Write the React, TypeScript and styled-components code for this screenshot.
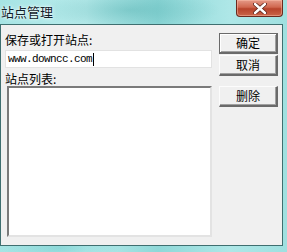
import React from "react";
import styled, { createGlobalStyle } from "styled-components";

const GlobalStyle = createGlobalStyle`
  html, body {
    margin: 0;
    padding: 0;
    background: #9fe2e2;
  }
  body {
    font-family: "Noto Sans CJK SC", "DejaVu Sans", sans-serif;
    font-size: 12px;
    color: #000;
  }
`;

const Frame = styled.div`
  width: 287px;
  height: 252px;
  display: flex;
  flex-direction: column;
  overflow: hidden;
  background:
    radial-gradient(ellipse 90px 20px at 130px 10px, rgba(60, 160, 160, 0.35), transparent),
    radial-gradient(ellipse 60px 14px at 60px 248px, rgba(80, 190, 190, 0.4), transparent),
    linear-gradient(90deg, #a6e4e4 0%, #b9ecec 30%, #8fd8d8 55%, #aee7e7 80%, #9fe0e0 100%);
`;

const TitleBar = styled.div`
  height: 24px;
  display: flex;
  align-items: flex-start;
  justify-content: space-between;
  flex-shrink: 0;
`;

const Title = styled.div`
  padding: 3px 0 0 1px;
  font-size: 13px;
  line-height: 17px;
  color: #10202a;
  text-shadow: 0 0 4px rgba(255, 255, 255, 0.9), 0 0 2px rgba(255, 255, 255, 0.9);
`;

const CloseButton = styled.div`
  width: 45px;
  height: 16px;
  margin-right: 4px;
  border: 1px solid #6b2a1e;
  border-top: none;
  border-radius: 0 0 4px 4px;
  background: linear-gradient(180deg, #e59a88 0%, #d0674f 45%, #b7432b 55%, #c9664a 100%);
  box-shadow: inset 0 0 0 1px rgba(255, 200, 180, 0.45);
  display: flex;
  align-items: center;
  justify-content: center;
`;

const Client = styled.div`
  flex: 1;
  margin: 0 4px 7px 0;
  border: 1px solid #3f6f70;
  background: #f0f0f0;
  display: flex;
  padding: 8px 4px 0 4px;
  gap: 7px;
`;

const LeftColumn = styled.div`
  width: 207px;
  display: flex;
  flex-direction: column;
`;

const Label = styled.div<{ $top: number }>`
  margin-top: ${(p) => p.$top}px;
  height: 14px;
  line-height: 14px;
  font-size: 12px;
  white-space: nowrap;
`;

const TextInput = styled.div`
  margin-top: 3px;
  height: 16px;
  border: 1px solid #e2e2e2;
  background: #fff;
  display: flex;
  align-items: center;
  padding-left: 2px;
  font-family: "Liberation Mono", "DejaVu Sans Mono", monospace;
  font-size: 11px;
  letter-spacing: -0.6px;
`;

const Caret = styled.span`
  display: inline-block;
  width: 1px;
  height: 13px;
  background: #000;
  margin-left: 1px;
`;

const ListBox = styled.div`
  margin: 0 0 8px 2px;
  width: 201px;
  height: 147px;
  background: #fff;
  border-top: 2px solid #7a7a7a;
  border-left: 2px solid #7a7a7a;
  border-right: 2px solid #e3e3e3;
  border-bottom: 2px solid #e3e3e3;
`;

const ButtonColumn = styled.div`
  width: 59px;
  display: flex;
  flex-direction: column;
`;

const Button = styled.div<{ $default?: boolean; $top: number }>`
  margin-top: ${(p) => p.$top}px;
  height: 21px;
  box-sizing: border-box;
  background: #f0f0f0;
  border-top: 1px solid ${(p) => (p.$default ? "#6a6a6a" : "#fcfcfc")};
  border-left: 1px solid ${(p) => (p.$default ? "#6a6a6a" : "#fcfcfc")};
  border-right: 2px solid #6a6a6a;
  border-bottom: 2px solid #6a6a6a;
  box-shadow: ${(p) =>
    p.$default
      ? "inset 1px 1px 0 #fff, inset -1px -1px 0 #a0a0a0"
      : "inset -1px -1px 0 #a0a0a0"};
  display: flex;
  align-items: center;
  justify-content: center;
  font-size: 12px;
  line-height: 14px;
`;

const CloseIcon = () => (
  <svg width="14" height="11" viewBox="0 0 14 11">
    <path
      d="M2 1 L12 10 M12 1 L2 10"
      stroke="#5a2218"
      strokeWidth="4"
      strokeLinecap="round"
    />
    <path
      d="M2 1 L12 10 M12 1 L2 10"
      stroke="#fff"
      strokeWidth="2.4"
      strokeLinecap="round"
    />
  </svg>
);

export default function App() {
  return (
    <>
      <GlobalStyle />
      <Frame>
        <TitleBar>
          <Title>站点管理</Title>
          <CloseButton>
            <CloseIcon />
          </CloseButton>
        </TitleBar>
        <Client>
          <LeftColumn>
            <Label $top={0}>保存或打开站点:</Label>
            <TextInput>
              www.downcc.com
              <Caret />
            </TextInput>
            <Label $top={4}>站点列表:</Label>
            <ListBox />
          </LeftColumn>
          <ButtonColumn>
            <Button $default $top={0}>
              确定
            </Button>
            <Button $top={1}>取消</Button>
            <Button $top={10}>删除</Button>
          </ButtonColumn>
        </Client>
      </Frame>
    </>
  );
}
